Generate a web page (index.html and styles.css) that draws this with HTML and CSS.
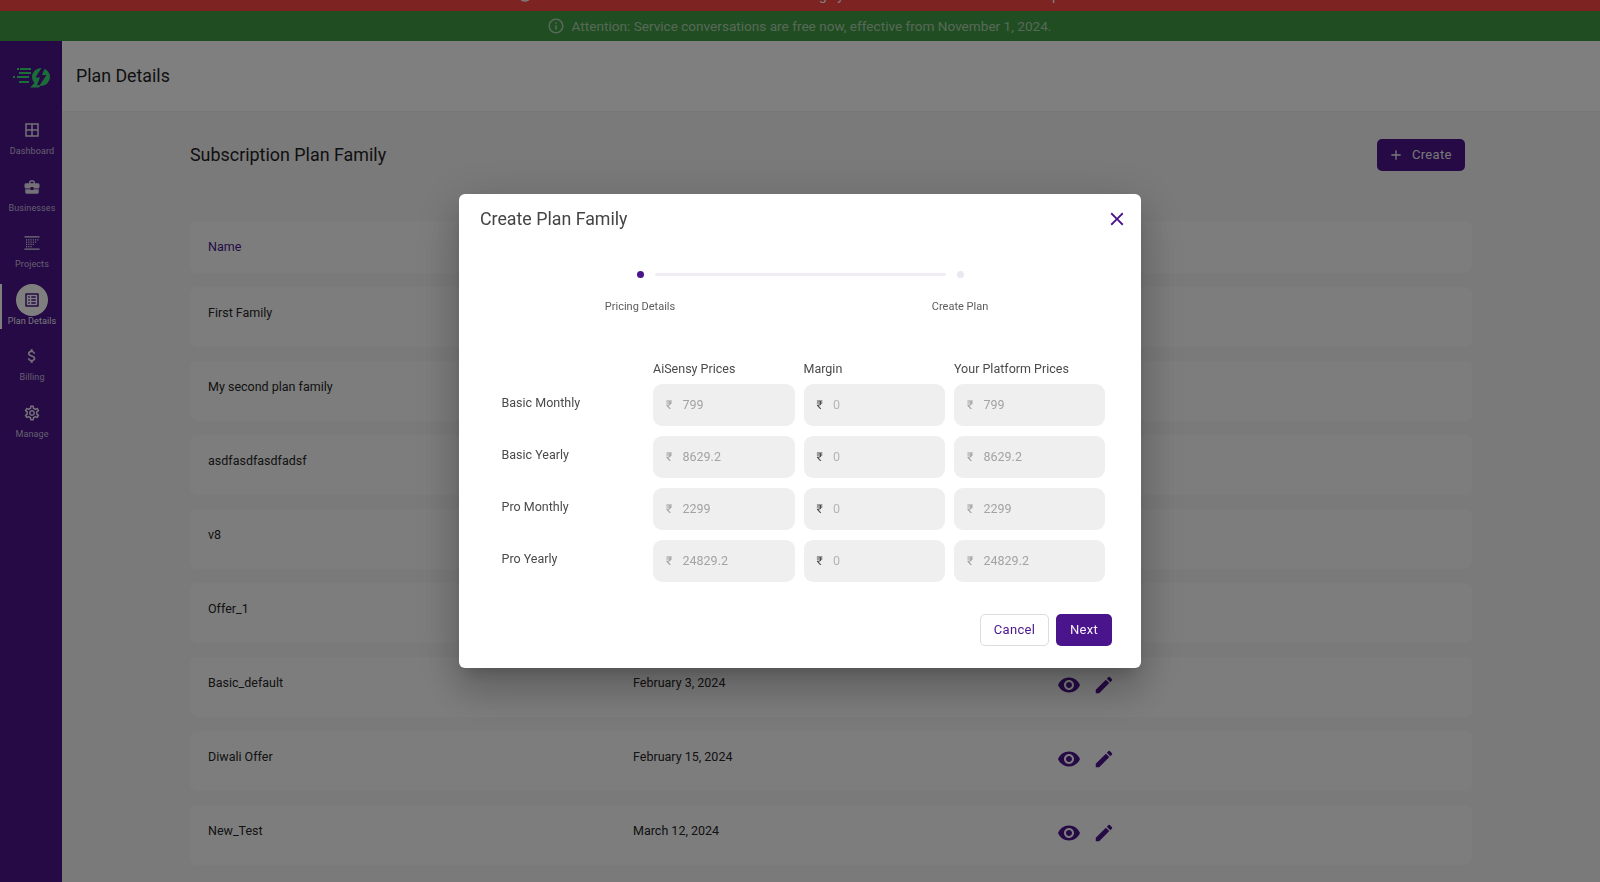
FILE: index.html
```html
<!DOCTYPE html>
<html lang="en">
<head>
<meta charset="utf-8">
<title>Plan Details</title>
<link rel="stylesheet" href="styles.css">
</head>
<body>
<svg class="defs" aria-hidden="true">
  <symbol id="i-eye" viewBox="0 0 24 24"><path d="M12 4.5C7 4.5 2.73 7.61 1 12c1.73 4.39 6 7.5 11 7.5s9.27-3.11 11-7.5c-1.73-4.39-6-7.5-11-7.5zM12 17c-2.76 0-5-2.24-5-5s2.24-5 5-5 5 2.24 5 5-2.24 5-5 5zm0-8c-1.66 0-3 1.34-3 3s1.34 3 3 3 3-1.34 3-3-1.34-3-3-3z"/></symbol>
  <symbol id="i-edit" viewBox="0 0 24 24"><path d="M3 17.25V21h3.75L17.81 9.94l-3.75-3.75L3 17.25zM20.71 7.04c.39-.39.39-1.02 0-1.41l-2.34-2.34c-.39-.39-1.02-.39-1.41 0l-1.83 1.83 3.75 3.75 1.83-1.83z"/></symbol>
  <symbol id="i-info" viewBox="0 0 24 24"><path d="M11 7h2v2h-2zm0 4h2v6h-2zm1-9C6.48 2 2 6.48 2 12s4.48 10 10 10 10-4.48 10-10S17.52 2 12 2zm0 18c-4.41 0-8-3.59-8-8s3.59-8 8-8 8 3.59 8 8-3.59 8-8 8z"/></symbol>
</svg>

<div class="page">
  <div class="banner-red">
    <div class="banner-red-line">
      <svg class="banner-red-icon"><use href="#i-info"/></svg>
      <span class="red-a">g   y</span>
      <span class="red-b">p</span>
    </div>
  </div>
  <div class="banner-green">
    <svg class="banner-icon"><use href="#i-info"/></svg>
    <span>Attention: Service conversations are free now, effective from November 1, 2024.</span>
  </div>

  <div class="main">
    <aside class="sidebar">
      <div class="logo">
        <svg width="38" height="22" viewBox="0 0 38 22">
          <g class="logo-lines">
            <rect x="4" y="2" width="2" height="2"/><rect x="7" y="2" width="11" height="2"/>
            <rect x="6" y="6" width="12" height="2"/>
            <rect x="0" y="10" width="2" height="2"/><rect x="4" y="10" width="12" height="2"/>
            <rect x="6" y="15" width="10" height="2"/>
          </g>
          <circle class="logo-mark" cx="28" cy="11" r="9"/>
          <path class="logo-tail" d="M17 21.500h9l3-4-6-2z"/>
          <path class="logo-bolt" d="M30-.5 22.500 11.500H27L24 19l2.500.5 7-10.500H29L32.500.5z"/>
        </svg>
      </div>
      <nav class="nav">
        <a class="nav-item">
          <span class="nav-icon"><svg viewBox="0 0 24 24"><path d="M3 3h18v18H3zM5 5v6h6V5zm8 0v6h6V5zm-8 8v6h6v-6zm8 0v6h6v-6z" fill-rule="evenodd"/></svg></span>
          <span class="nav-label">Dashboard</span>
        </a>
        <a class="nav-item">
          <span class="nav-icon"><svg viewBox="0 0 24 24"><path d="M10 16v-1H3.010L3 19c0 1.110.89 2 2 2h14c1.110 0 2-.89 2-2v-4h-7v1h-4zm10-9h-4.010V5l-2-2h-4l-2 2v2H4c-1.100 0-2 .9-2 2v3c0 1.110.89 2 2 2h6v-2h4v2h6c1.100 0 2-.9 2-2V9c0-1.100-.9-2-2-2zm-6 0h-4V5h4v2z"/></svg></span>
          <span class="nav-label">Businesses</span>
        </a>
        <a class="nav-item">
          <span class="nav-icon"><svg viewBox="0 0 24 24"><path d="M2 3h20v1.600H2zM2 19.400h20V21H2zM4 7h1.500v1.500H4zm3 0h1.500v1.500H7zm3 0h1.500v1.500H10zm3 0h1.500v1.500H13zm3 0h1.500v1.500H16zm3 0h1.500v1.500H19zM4 10h1.500v1.500H4zm3 0h1.500v1.500H7zm3 0h1.500v1.500H10zm3 0h1.500v1.500H13zm3 0h1.500v1.500H16zM4 13h1.500v1.500H4zm3 0h1.500v1.500H7zm3 0h1.500v1.500H10zm3 0h1.500v1.500H13zM4 16h1.500v1.500H4zm3 0h1.500v1.500H7zm3 0h1.500v1.500H10z"/></svg></span>
          <span class="nav-label">Projects</span>
        </a>
        <a class="nav-item is-active">
          <span class="nav-icon"><svg viewBox="0 0 24 24"><path d="M19 5v14H5V5h14m1.100-2H3.900c-.5 0-.9.4-.9.9v16.200c0 .4.4.9.9.9h16.200c.4 0 .9-.5.9-.9V3.900c0-.5-.5-.9-.9-.9zM11 7h6v2h-6V7zm0 4h6v2h-6v-2zm0 4h6v2h-6zM7 7h2v2H7zm0 4h2v2H7zm0 4h2v2H7z"/></svg></span>
          <span class="nav-label">Plan Details</span>
        </a>
        <a class="nav-item">
          <span class="nav-icon"><svg viewBox="0 0 24 24"><path d="M11.800 10.900c-2.270-.59-3-1.200-3-2.150 0-1.090 1.010-1.850 2.700-1.850 1.780 0 2.440.85 2.500 2.100h2.210c-.07-1.720-1.120-3.300-3.210-3.810V3h-3v2.160c-1.940.42-3.500 1.680-3.500 3.610 0 2.310 1.910 3.460 4.700 4.130 2.500.6 3 1.480 3 2.410 0 .69-.49 1.790-2.700 1.790-2.060 0-2.870-.92-2.980-2.100h-2.200c.12 2.190 1.760 3.420 3.680 3.830V21h3v-2.150c1.950-.37 3.500-1.500 3.500-3.550 0-2.840-2.430-3.810-4.700-4.400z"/></svg></span>
          <span class="nav-label">Billing</span>
        </a>
        <a class="nav-item">
          <span class="nav-icon"><svg viewBox="0 0 24 24"><path d="M19.430 12.980c.04-.32.07-.64.07-.98 0-.34-.03-.66-.07-.98l2.110-1.650c.19-.15.24-.42.12-.64l-2-3.460c-.09-.16-.26-.25-.44-.25-.06 0-.12.01-.17.03l-2.490 1c-.52-.4-1.080-.73-1.690-.98l-.38-2.650C14.460 2.180 14.250 2 14 2h-4c-.25 0-.46.18-.49.42l-.38 2.650c-.61.25-1.170.59-1.690.98l-2.490-1c-.06-.02-.12-.03-.18-.03-.17 0-.34.09-.43.25l-2 3.460c-.13.22-.07.49.12.64l2.110 1.650c-.04.32-.07.65-.07.98 0 .33.03.66.07.98l-2.110 1.650c-.19.15-.24.42-.12.64l2 3.460c.09.16.26.25.44.25.06 0 .12-.01.17-.03l2.490-1c.52.4 1.080.73 1.690.98l.38 2.650c.03.24.24.42.49.42h4c.25 0 .46-.18.49-.42l.38-2.650c.61-.25 1.170-.59 1.690-.98l2.490 1c.06.02.12.03.18.03.17 0 .34-.09.43-.25l2-3.460c.12-.22.07-.49-.12-.64l-2.110-1.650zm-1.980-1.710c.04.31.05.52.05.73 0 .21-.02.43-.05.73l-.14 1.130.89.7 1.080.84-.7 1.210-1.270-.51-1.040-.42-.9.68c-.43.32-.84.56-1.250.73l-1.060.43-.16 1.130-.2 1.350h-1.400l-.19-1.350-.16-1.130-1.060-.43c-.43-.18-.83-.41-1.230-.71l-.91-.7-1.060.43-1.270.51-.7-1.210 1.080-.84.89-.7-.14-1.130c-.03-.31-.05-.54-.05-.74s.02-.43.05-.73l.14-1.130-.89-.7-1.080-.84.7-1.210 1.270.51 1.040.42.9-.68c.43-.32.84-.56 1.250-.73l1.060-.43.16-1.130.2-1.350h1.390l.19 1.350.16 1.130 1.060.43c.43.18.83.41 1.230.71l.91.7 1.060-.43 1.270-.51.7 1.210-1.070.85-.89.7.14 1.130zM12 8c-2.210 0-4 1.790-4 4s1.790 4 4 4 4-1.790 4-4-1.790-4-4-4zm0 6c-1.100 0-2-.9-2-2s.9-2 2-2 2 .9 2 2-.9 2-2 2z"/></svg></span>
          <span class="nav-label">Manage</span>
        </a>
      </nav>
    </aside>

    <div class="content">
      <header class="topbar"><h1 class="page-title">Plan Details</h1></header>
      <section class="body">
        <div class="heading-row">
          <h2 class="heading">Subscription Plan Family</h2>
          <button class="btn-create">
            <svg viewBox="0 0 24 24"><path d="M19 13h-6v6h-2v-6H5v-2h6V5h2v6h6v2z"/></svg>
            <span>Create</span>
          </button>
        </div>
        <div class="table">
          <div class="row row-head"><span class="cell-name">Name</span></div>
          <div class="row"><span class="cell-name">First Family</span></div>
          <div class="row"><span class="cell-name">My second plan family</span></div>
          <div class="row"><span class="cell-name">asdfasdfasdfadsf</span></div>
          <div class="row"><span class="cell-name">v8</span></div>
          <div class="row"><span class="cell-name">Offer_1</span></div>
          <div class="row">
            <span class="cell-name">Basic_default</span><span class="cell-date">February 3, 2024</span>
            <span class="cell-actions"><svg class="ic-eye"><use href="#i-eye"/></svg><svg class="ic-edit"><use href="#i-edit"/></svg></span>
          </div>
          <div class="row">
            <span class="cell-name">Diwali Offer</span><span class="cell-date">February 15, 2024</span>
            <span class="cell-actions"><svg class="ic-eye"><use href="#i-eye"/></svg><svg class="ic-edit"><use href="#i-edit"/></svg></span>
          </div>
          <div class="row">
            <span class="cell-name">New_Test</span><span class="cell-date">March 12, 2024</span>
            <span class="cell-actions"><svg class="ic-eye"><use href="#i-eye"/></svg><svg class="ic-edit"><use href="#i-edit"/></svg></span>
          </div>
        </div>
      </section>
    </div>
  </div>
</div>

<div class="backdrop">
  <div class="modal">
    <div class="modal-head">
      <h3 class="modal-title">Create Plan Family</h3>
      <svg class="modal-close" viewBox="0 0 24 24"><path d="M19 6.410 17.590 5 12 10.590 6.410 5 5 6.410 10.590 12 5 17.590 6.410 19 12 13.410 17.590 19 19 17.590 13.410 12z"/></svg>
    </div>
    <div class="stepper">
      <span class="dot dot-on"></span><span class="step-line"></span><span class="dot"></span>
      <span class="step-label step-first">Pricing Details</span>
      <span class="step-label step-last">Create Plan</span>
    </div>
    <div class="price-grid">
      <span></span><span class="col-head">AiSensy Prices</span><span class="col-head">Margin</span><span class="col-head">Your Platform Prices</span>

      <span class="row-label">Basic Monthly</span>
      <div class="field"><span class="cur">₹</span><span class="val">799</span></div>
      <div class="field"><span class="cur cur-dark">₹</span><span class="val val-light">0</span></div>
      <div class="field"><span class="cur">₹</span><span class="val">799</span></div>

      <span class="row-label">Basic Yearly</span>
      <div class="field"><span class="cur">₹</span><span class="val">8629.2</span></div>
      <div class="field"><span class="cur cur-dark">₹</span><span class="val val-light">0</span></div>
      <div class="field"><span class="cur">₹</span><span class="val">8629.2</span></div>

      <span class="row-label">Pro Monthly</span>
      <div class="field"><span class="cur">₹</span><span class="val">2299</span></div>
      <div class="field"><span class="cur cur-dark">₹</span><span class="val val-light">0</span></div>
      <div class="field"><span class="cur">₹</span><span class="val">2299</span></div>

      <span class="row-label">Pro Yearly</span>
      <div class="field"><span class="cur">₹</span><span class="val">24829.2</span></div>
      <div class="field"><span class="cur cur-dark">₹</span><span class="val val-light">0</span></div>
      <div class="field"><span class="cur">₹</span><span class="val">24829.2</span></div>
    </div>
    <div class="modal-foot">
      <button class="btn btn-cancel">Cancel</button>
      <button class="btn btn-next">Next</button>
    </div>
  </div>
</div>
</body>
</html>
```

FILE: styles.css
```css
* { box-sizing: border-box; }
html, body { margin: 0; height: 100%; overflow: hidden; }
body { font-family: Roboto, "Noto Sans", sans-serif; color: #222; background: #f5f5f5; }
h1, h2, h3 { margin: 0; font-weight: 400; }
.defs { display: none; }

.page { display: flex; flex-direction: column; height: 882px; overflow: hidden; }

.banner-red { height: 11px; flex: none; background: #fa4846; overflow: hidden; }
.banner-red-line { display: flex; align-items: flex-start; height: 16px; margin-top: -13px; padding-left: 517px; font-size: 14px; line-height: 16px; color: #fff; }
.banner-red-icon { width: 16px; height: 16px; fill: #fff; flex: none; }
.red-a { margin-left: 286px; white-space: pre; }
.red-b { margin-left: 208px; }

.banner-green { height: 30px; flex: none; padding-right: 2px; background: #429a45; color: rgba(255,255,255,.58); display: flex; align-items: center; justify-content: center; gap: 7px; font-size: 13.600px; }
.banner-icon { width: 18px; height: 18px; fill: rgba(255,255,255,.58); flex: none; }

.main { flex: 1; display: flex; min-height: 0; }

.sidebar { width: 62px; flex: none; background: #4a148c; display: flex; flex-direction: column; }
.logo { height: 73px; padding: 25px 0 0 13px; }
.logo svg { display: block; }
.logo-lines { fill: #36dc72; }
.logo-mark { fill: #36dc72; }
.logo-tail { fill: #36dc72; }
.logo-bolt { fill: #4a148c; }
.nav { display: flex; flex-direction: column; }
.nav-item { position: relative; height: 56.500px; padding-left: 2px; display: flex; flex-direction: column; align-items: center; color: rgba(255,255,255,.72); }
.nav-icon { width: 32px; height: 32px; display: flex; align-items: center; justify-content: center; border-radius: 50%; flex: none; }
.nav-icon svg { width: 18px; height: 18px; fill: rgba(255,255,255,.88); }
.nav-label { font-size: 9px; line-height: 11px; letter-spacing: .1px; white-space: nowrap; }
.is-active { color: rgba(255,255,255,.95); }
.is-active .nav-icon { background: #fff; }
.is-active .nav-icon svg { fill: #4a148c; }
.is-active::before { content: ""; position: absolute; left: 0; top: 0; width: 2px; height: 45px; background: #fff; }

.content { flex: 1; min-width: 0; display: flex; flex-direction: column; }
.topbar { height: 70px; flex: none; background: #fff; padding-left: 14px; display: flex; align-items: center; box-shadow: 0 1px 3px rgba(0,0,0,.04); }
.page-title { font-size: 17.800px; line-height: 20px; color: #1f1f1f; }
.body { padding: 28px 128px 0; }
.heading-row { display: flex; align-items: center; justify-content: space-between; height: 32px; padding-right: 7px; }
.heading { font-size: 17.900px; line-height: 20px; padding-bottom: 1px; color: #1f1f1f; }
.btn-create { width: 88px; height: 32px; border: 0; border-radius: 5px; background: #4a148c; color: #f0f0f0; display: flex; align-items: center; gap: 8px; padding: 0 0 1px 11px; font: 400 13px Roboto, sans-serif; letter-spacing: .3px; }
.btn-create svg { width: 16px; height: 16px; fill: #f0f0f0; flex: none; }

.table { margin-top: 50px; display: flex; flex-direction: column; gap: 14px; }
.row { height: 60px; background: #fbfbfb; border-radius: 8px; display: flex; align-items: flex-start; padding: 18px 18px 0; font-size: 12.500px; line-height: 16px; color: #262626; }
.row-head { height: 52px; align-items: center; padding-top: 0; color: #4a148c; }
.cell-name { width: 425px; flex: none; }
.cell-date { width: 424px; flex: none; }
.cell-actions { display: flex; align-items: center; gap: 12px; margin-top: -2px; }
.ic-eye { width: 24px; height: 24px; fill: #4a148c; flex: none; }
.ic-edit { width: 22px; height: 22px; fill: #4a148c; flex: none; }

.backdrop { position: fixed; inset: 0; background: rgba(0,0,0,.5); display: flex; justify-content: center; align-items: flex-start; padding-top: 194px; }
.modal { width: 682px; height: 474px; background: #fff; border-radius: 6px; display: flex; flex-direction: column; box-shadow: 0 11px 15px -7px rgba(0,0,0,.2), 0 24px 38px 3px rgba(0,0,0,.14), 0 9px 46px 8px rgba(0,0,0,.12); }
.modal-head { height: 49px; flex: none; display: flex; align-items: center; justify-content: space-between; padding: 0 13px 0 21px; }
.modal-title { font-size: 17.800px; color: #444; }
.modal-close { width: 22px; height: 22px; fill: #4a148c; flex: none; }

.stepper { width: 327px; margin: 28px auto 0; display: grid; grid-template-columns: 7px 1fr 7px; grid-template-rows: 7px 14px; row-gap: 22px; align-items: center; }
.dot { width: 7px; height: 7px; border-radius: 50%; background: #e9e7ef; }
.dot-on { background: #4a148c; }
.step-line { height: 3px; margin: 0 11px; border-radius: 2px; background: #efedf3; }
.step-label { font-size: 11px; line-height: 14px; color: #5c5c5c; white-space: nowrap; justify-self: center; }
.step-first { grid-column: 1; grid-row: 2; }
.step-last { grid-column: 3; grid-row: 2; }

.price-grid { margin-top: 46px; padding-left: 42px; display: grid; grid-template-columns: 143px 141.500px 141.500px 151px; column-gap: 9px; grid-template-rows: 13.500px repeat(4, 41.500px); row-gap: 10.500px; }
.col-head { font-size: 12.500px; line-height: 17px; color: #4a4a4a; white-space: nowrap; }
.row-label { font-size: 12.500px; line-height: 16px; padding: 11px 0 0 .5px; color: #4a4a4a; }
.field { background: #efefef; border-radius: 9px; display: flex; align-items: center; padding: 0 13px; font-size: 12.500px; }
.cur { width: 16.500px; flex: none; font-size: 12px; color: #a0a0a0; }
.cur-dark { color: #4a4a4a; }
.val { color: #a3a3a3; }
.val-light { color: #b5b5b5; }

.modal-foot { display: flex; justify-content: flex-end; gap: 7px; margin-top: 32px; padding-right: 29px; }
.btn { height: 32px; border-radius: 5px; font: 400 13px Roboto, sans-serif; letter-spacing: .3px; padding: 0; }
.btn-cancel { width: 69px; background: #fff; border: 1px solid #dcdcdc; color: #4a148c; }
.btn-next { width: 56px; background: #4a148c; border: 0; color: #f5f0fa; }
```
